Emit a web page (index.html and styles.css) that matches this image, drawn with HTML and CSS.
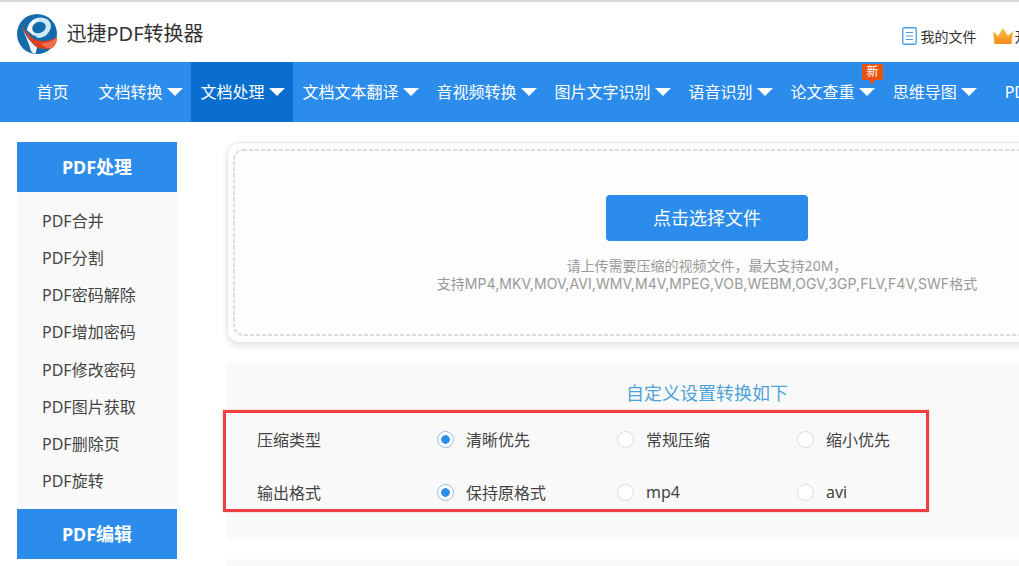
FILE: index.html
```html
<!DOCTYPE html>
<html lang="zh-CN">
<head>
<meta charset="utf-8">
<title>迅捷PDF转换器</title>
<link rel="stylesheet" href="styles.css">
</head>
<body>
<div class="page">
  <header class="header">
    <svg class="logo" viewBox="0 0 40 40" aria-hidden="true">
      <circle cx="20" cy="20" r="20" fill="#136bab"/>
      <path d="M10 16 C11 8 17 3 24 3.5 C32 4 36 10 33 16 C31 21 26 24 21 24 Z" fill="#cfe8f6"/>
      <path d="M10 16 C12 10 16 6 21 5 C17 8 15 11 15 14 L17 22 Z" fill="#fff"/>
      <ellipse cx="22" cy="13.5" rx="7" ry="5.5" fill="#136bab" transform="rotate(-25 22 13.5)"/>
      <path d="M4 10 C8 17 13 23 19 26 C26 28 34 27 40 23 C40 28 38 32 35 34 C30 36 25 35 20 33.5 C14 29 8 20 4 10Z" fill="#dd3f23"/>
      <path d="M24 29 C30 29 36 27 40 23 C40 28 38 32 35 34 C30 35 27 33 24 29Z" fill="#ee6f4e"/>
      <path d="M5 14 C8 21 14 29 20 33.5 L18.5 39.8 C16 39.5 15 38.5 14 37 C12 29 8 21 5 14Z" fill="#f4f8fb"/>
    </svg>
    <div class="brand">迅捷PDF转换器</div>
    <div class="top-actions">
      <a class="top-link">
        <svg class="doc-icon" viewBox="0 0 15 18" aria-hidden="true">
          <rect x="0.75" y="0.75" width="13.5" height="16.5" rx="1.5" fill="none" stroke="#4a9be0" stroke-width="1.3"/>
          <path d="M4 5.5H11M4 9H11M4 12.5H11" stroke="#4a9be0" stroke-width="1.2"/>
        </svg>
        我的文件
      </a>
      <a class="top-link vip">
        <svg class="crown" viewBox="0 0 20 16" aria-hidden="true">
          <defs>
            <linearGradient id="crown-fill" x1="0" y1="0" x2="0" y2="1">
              <stop offset="0" stop-color="#fcc23c"/>
              <stop offset="1" stop-color="#f58a20"/>
            </linearGradient>
          </defs>
          <path d="M0 3 L5 8 L10 0 L15 8 L20 3 L18.5 16 H1.5Z" fill="url(#crown-fill)"/>
        </svg>
        开通会员
      </a>
    </div>
  </header>

  <nav class="nav">
    <a class="nav-item home">首页</a>
    <a class="nav-item">文档转换<i class="caret"></i></a>
    <a class="nav-item active">文档处理<i class="caret"></i></a>
    <a class="nav-item">文档文本翻译<i class="caret"></i></a>
    <a class="nav-item">音视频转换<i class="caret"></i></a>
    <a class="nav-item">图片文字识别<i class="caret"></i></a>
    <a class="nav-item">语音识别<i class="caret"></i></a>
    <a class="nav-item">论文查重<i class="caret"></i><span class="badge">新</span></a>
    <a class="nav-item">思维导图<i class="caret"></i></a>
    <a class="nav-item last">PDF工具<i class="caret"></i></a>
  </nav>

  <div class="content">
    <aside class="sidebar">
      <h2 class="side-title">PDF处理</h2>
      <ul class="side-list">
        <li>PDF合并</li>
        <li>PDF分割</li>
        <li>PDF密码解除</li>
        <li>PDF增加密码</li>
        <li>PDF修改密码</li>
        <li>PDF图片获取</li>
        <li>PDF删除页</li>
        <li>PDF旋转</li>
      </ul>
      <h2 class="side-title">PDF编辑</h2>
    </aside>

    <main class="main">
      <section class="upload">
        <div class="drop">
          <svg class="dash-frame" aria-hidden="true"><rect class="dash-rect" x="1" y="1" rx="9" ry="9"/></svg>
          <button class="pick" type="button">点击选择文件</button>
          <p class="hint">请上传需要压缩的视频文件，最大支持20M，<br><span class="hint-formats">支持MP4,MKV,MOV,AVI,WMV,M4V,MPEG,VOB,WEBM,OGV,3GP,FLV,F4V,SWF格式</span></p>
        </div>
      </section>

      <section class="settings">
        <h3 class="settings-title">自定义设置转换如下</h3>
        <div class="row">
          <span class="row-label">压缩类型</span>
          <label class="opt"><i class="radio on"></i>清晰优先</label>
          <label class="opt"><i class="radio"></i>常规压缩</label>
          <label class="opt"><i class="radio"></i>缩小优先</label>
        </div>
        <div class="row">
          <span class="row-label">输出格式</span>
          <label class="opt"><i class="radio on"></i>保持原格式</label>
          <label class="opt"><i class="radio"></i>mp4</label>
          <label class="opt"><i class="radio"></i>avi</label>
        </div>
        <div class="highlight"></div>
      </section>

      <section class="next-panel"></section>
    </main>
  </div>
</div>
</body>
</html>
```

FILE: styles.css
```css
* { box-sizing: border-box; }
html, body { margin: 0; height: 100%; overflow: hidden; background: #fff; }
body {
  font-family: "Noto Sans", "Noto Sans CJK SC", sans-serif;
  color: #444;
}
.page { width: 1400px; }

.header {
  height: 62px;
  border-top: 2px solid #d9d9d9;
  display: flex;
  align-items: center;
  padding-left: 17px;
}
.logo { width: 40px; height: 40px; flex: none; margin-top: 4px; }
.brand { margin-left: 9.5px; font-size: 20px; color: #333; line-height: 28px; margin-top: 3px; }
.top-actions { margin-left: 698px; display: flex; align-items: center; margin-top: 8px; }
.top-link { display: flex; align-items: center; font-size: 14px; color: #333; white-space: nowrap; }
.doc-icon { width: 15px; height: 18px; margin-right: 4px; }
.vip { margin-left: 16px; }
.crown { width: 20px; height: 16px; margin-right: 2px; }

.nav {
  height: 60px;
  background: #2b8cec;
  display: flex;
  padding-left: 27px;
}
.nav-item {
  position: relative;
  display: flex;
  align-items: center;
  padding: 0 8.5px 2px 9.5px;
  font-size: 16px;
  color: #fff;
  white-space: nowrap;
}
.nav-item.home { padding-right: 20.5px; }
.nav-item.active { background: #0a6ed1; }
.nav-item.last { margin-left: 10px; }
.caret {
  width: 0;
  height: 0;
  margin: 2px 0 0 4px;
  border-left: 8px solid transparent;
  border-right: 8px solid transparent;
  border-top: 8px solid #fff;
}
.badge {
  position: absolute;
  left: 81px;
  top: 2px;
  width: 21px;
  height: 16px;
  background: #e8540f;
  font-size: 12px;
  line-height: 16px;
  text-align: center;
  color: #fff;
}
.badge::after {
  content: "";
  position: absolute;
  left: 7px;
  top: 16px;
  border-left: 3px solid transparent;
  border-right: 3px solid transparent;
  border-top: 5px solid #e8540f;
}

.content { display: flex; padding: 20px 0 0 17px; align-items: flex-start; }
.sidebar { width: 160px; flex: none; }
.side-title {
  margin: 0;
  height: 50px;
  background: #2b8cec;
  color: #fff;
  font-size: 18px;
  font-weight: 700;
  line-height: 50px;
  text-align: center;
}
.side-list {
  list-style: none;
  margin: 0;
  padding: 11px 0 10px 25px;
  background: #f9f9f9;
  height: 317px;
}
.side-list li { height: 37.15px; line-height: 36px; font-size: 16px; color: #444; }

.main { width: 960px; margin-left: 50px; }
.upload {
  height: 201px;
  padding: 6px 5px;
  border: 1px solid #e6e6e6;
  border-radius: 12px;
  background: #fdfdfd;
  box-shadow: 0 3px 6px rgba(0, 0, 0, .1);
}
.drop {
  position: relative;
  height: 100%;
  display: flex;
  flex-direction: column;
  align-items: center;
  padding-top: 46px;
}
.dash-frame {
  position: absolute;
  inset: 0;
  width: 100%;
  height: 100%;
}
.dash-rect {
  width: calc(100% - 2px);
  height: calc(100% - 2px);
  fill: none;
  stroke: #dcdcdc;
  stroke-width: 2;
  stroke-dasharray: 4 2;
}
.pick {
  position: relative;
  width: 202px;
  height: 46px;
  padding-bottom: 3px;
  border: 0;
  border-radius: 4px;
  background: #2b8cec;
  color: #fff;
  font: inherit;
  font-size: 18px;
}
.hint { position: relative; margin: 16px 0 0; font-size: 14px; line-height: 18px; color: #999; text-align: center; }
.hint-formats { font-family: Inter, "Noto Sans CJK SC", sans-serif; letter-spacing: .07px; }

.settings {
  position: relative;
  margin-top: 20px;
  height: 176px;
  background: #f9f9f9;
  padding: 16px 0 0 30px;
}
.settings-title {
  margin: 0 0 0 -30px;
  font-size: 18px;
  font-weight: 400;
  line-height: 28px;
  color: #4ea3d8;
  text-align: center;
}
.row {
  display: grid;
  grid-template-columns: repeat(4, 180px);
  height: 53px;
  align-items: center;
  font-size: 16px;
  color: #444;
}
.settings-title + .row { margin-top: 6px; }
.row-label, .opt { padding-bottom: 2px; }
.opt { display: flex; align-items: center; }
.radio {
  width: 17px;
  height: 17px;
  margin: 2px 12px 0 0;
  border: 1px solid #dcdcdc;
  border-radius: 50%;
  background: #fff;
  flex: none;
}
.radio.on {
  border-color: #8fbdea;
  background: radial-gradient(circle, #2b8cec 0 4px, #fff 4.6px);
}
.highlight {
  position: absolute;
  left: -4px;
  top: 47px;
  width: 706px;
  height: 102px;
  border: 3px solid #ee3f45;
  box-shadow: 0 0 1px rgba(238, 63, 69, .7);
  pointer-events: none;
}
.next-panel { margin-top: 20px; height: 60px; background: #f9f9f9; }
```
